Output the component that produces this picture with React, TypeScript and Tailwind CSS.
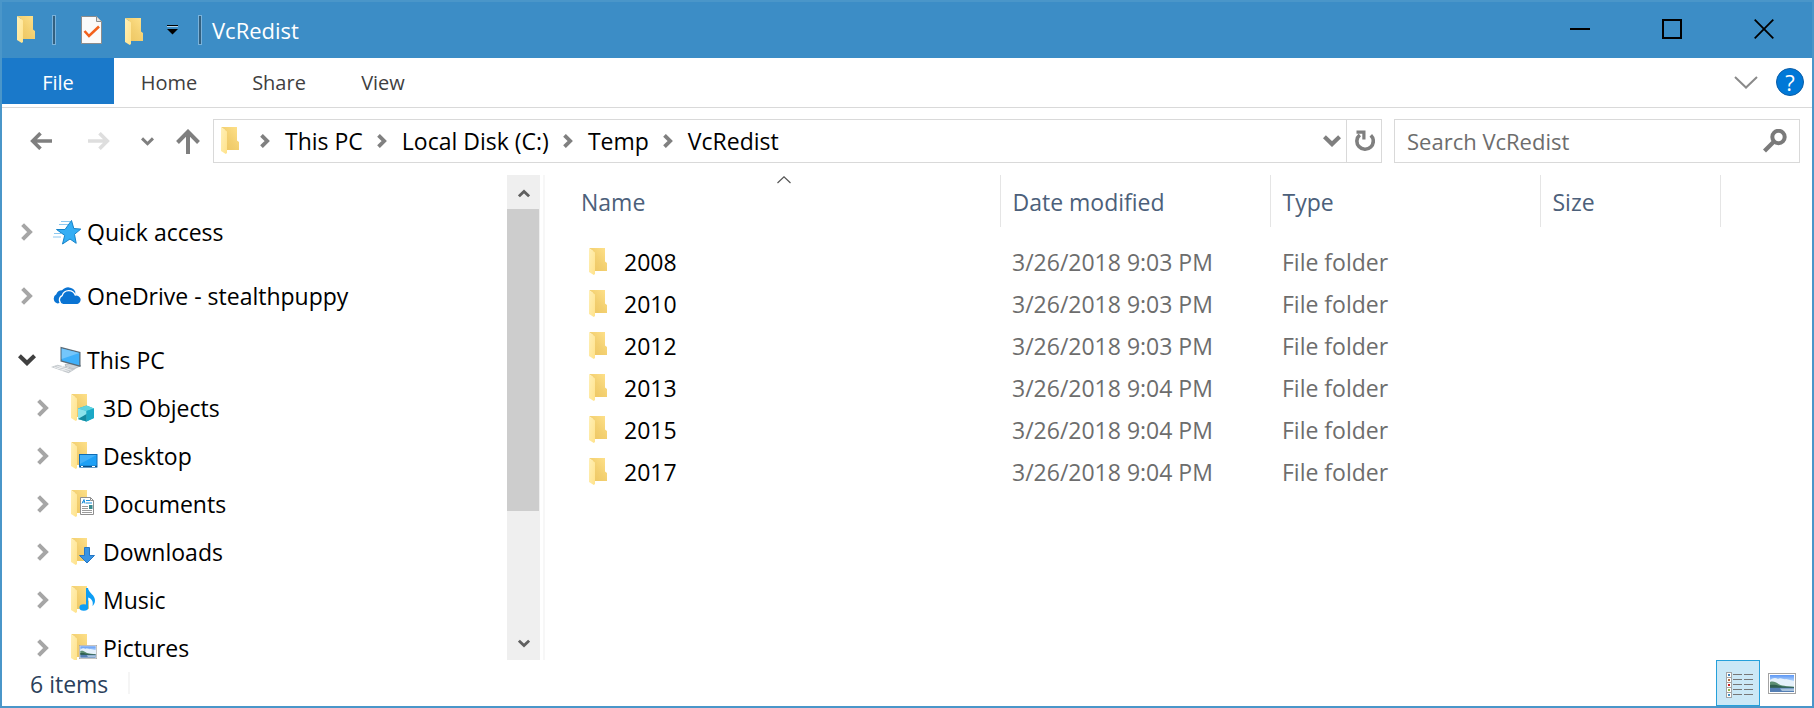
import React, { useId } from "react";

type IconProps = { className?: string };

function Chevron({ className = "" }: IconProps) {
  return (
    <svg viewBox="0 0 12 18" className={"h-[18px] w-3 shrink-0 " + className} fill="none" stroke="currentColor" strokeWidth="4">
      <path d="M1.600 1.600 9 9l-7.400 7.400" />
    </svg>
  );
}

function ChevronDown({ className = "" }: IconProps) {
  return (
    <svg viewBox="0 0 18 12" className={"shrink-0 " + className} fill="none" stroke="currentColor" strokeWidth="4.200">
      <path d="M1.400 1.700 9 9.100l7.600-7.400" />
    </svg>
  );
}

function CrumbArrow() {
  return (
    <svg viewBox="0 0 10 14" className="h-3.5 w-2.5 shrink-0 text-[#808080]" fill="none" stroke="currentColor" strokeWidth="3.800">
      <path d="M1.500 1.300 7.200 7l-5.700 5.700" />
    </svg>
  );
}

function FolderShape({ id }: { id: string }) {
  return (
    <>
      <defs>
        <linearGradient id={id + "b"} x1="0" y1="1" x2="1" y2="0">
          <stop offset="0" stopColor="#ecc45f" />
          <stop offset="0.500" stopColor="#f3d071" />
          <stop offset="1" stopColor="#ffe28c" />
        </linearGradient>
        <linearGradient id={id + "f"} x1="0" y1="0" x2="1" y2="1">
          <stop offset="0" stopColor="#fff0b8" />
          <stop offset="1" stopColor="#ffe28a" />
        </linearGradient>
      </defs>
      <path d="M0 0h16v13.500l2 1.500v8H4V3z" fill={`url(#${id}b)`} />
      <path d="M0 0 6 4.500v21.500l-1.200 1L0 24z" fill={`url(#${id}f)`} />
    </>
  );
}

function Folder({ className = "", children }: IconProps & { children?: React.ReactNode }) {
  const id = useId().replace(/[^a-zA-Z0-9]/g, "");
  return (
    <svg viewBox="0 0 27 28" className={"h-7 w-[27px] shrink-0 " + className}>
      <FolderShape id={id} />
      {children}
    </svg>
  );
}

function Landscape() {
  return (
    <>
      <defs>
        <linearGradient id="sky" x1="0" y1="0" x2="0" y2="1">
          <stop offset="0" stopColor="#5c97f5" />
          <stop offset="1" stopColor="#b5d6fb" />
        </linearGradient>
      </defs>
      <rect x="0.500" y="0.500" width="27" height="20" fill="#fff" stroke="#a3a3a3" />
      <rect x="2" y="2" width="24" height="17" fill="#dcecfb" />
      <rect x="2" y="2" width="24" height="6" fill="url(#sky)" />
      <path d="M2 7c3-2 5-3 8-1 3-2 5 1 8 0l8 2v6H2z" fill="#e6f1fb" />
      <path d="M2 9c3-1 6 0 8.500 2s5 1.500 8 2.200l7.500.6v.6H2z" fill="#5d8f73" />
      <path d="M2 12c5-.6 9 .8 13 1.500l11 .5v1H2z" fill="#2f5f50" />
      <rect x="2" y="14.800" width="24" height="4.200" fill="#557fb5" />
      <path d="M12 15.500h14V18H14z" fill="#a9c3dd" />
    </>
  );
}

function StarIcon() {
  return (
    <svg viewBox="0 0 30 26" className="h-[26px] w-[30px]">
      <path d="M10 2.500h9M8 5.500h9M3 14.500h7M2 18h8" stroke="#8cc8f0" strokeWidth="1" />
      <path d="m20.500 1.500 2.300 8 7 .6-6.300 5.200 1.700 9-6.200-4.300-7.500 5 2.200-8.600L5.500 10.500H14z" fill="#35aef4" stroke="#1583c9" strokeWidth="1" />
    </svg>
  );
}

function CloudIcon() {
  return (
    <svg viewBox="0 0 30 20" className="h-5 w-[30px]">
      <path d="M6.500 17.500A5 5 0 0 1 5.300 8.300 6 6 0 0 1 11 4.200a8 8 0 0 1 13.300 1.600L24 13z" fill="#0a74d3" />
      <path d="M12 18.600a4.800 4.800 0 0 1-.8-9 6.900 6.900 0 0 1 13-.6 4.900 4.900 0 0 1 2.300 9.600z" fill="#0a74d3" stroke="#fff" strokeWidth="1.300" />
    </svg>
  );
}

function ComputerIcon() {
  return (
    <svg viewBox="0 0 30 28" className="h-7 w-[30px]">
      <path d="m14 18.500 8-1.500 8 2.500-7 3.500-8-2z" fill="#cfd4d8" stroke="#9aa1a6" strokeWidth=".6" />
      <path d="m9.500.8 20 5.200v15L9.500 15.500z" fill="#5a6a76" />
      <path d="m10.700 2.400 17.600 4.600v12.200l-17.600-4.700z" fill="#3fb0fa" />
      <path d="m10.700 2.400 17.600 4.600-17.600 6z" fill="#74c6fb" />
      <path d="m0 21 6.500-2.300L24 23.300l-6.500 4z" fill="#c3c8cc" />
      <path d="m3 21 15 4.500M5.500 20l15 4.300M6 23l7-3.200m-2.500 4.700 7-3" stroke="#f4f5f6" strokeWidth=".8" />
    </svg>
  );
}

function CubeOverlay() {
  return (
    <>
      <path d="m7 14.500 8.500-3 7.500 3v9.500l-7.500 3.500L7 25z" fill="#25b4cc" />
      <path d="m7 14.500 8.500-3 7.500 3-7.500 2.500z" fill="#5fd3e0" />
      <path d="M7 14.500 15.500 17v10.500L7 25z" fill="#8be3ec" />
      <path d="m15.500 17 7.500-2.500V24l-7.500 3.500z" fill="#1ba8c6" />
      <path d="m7 25 8.500-5v7.500z" fill="#14899f" />
    </>
  );
}

function DesktopOverlay() {
  return (
    <>
      <rect x="8.500" y="12.500" width="17.500" height="12.500" fill="#1ea0f5" stroke="#0e6bb4" />
      <path d="M9 13h16.500L9 22z" fill="#42b0f8" />
      <path d="M9 24.500h17" stroke="#0b4f86" strokeWidth="1.500" />
      <path d="M10 24.500h2m9 0h3" stroke="#fff" strokeWidth="1" />
    </>
  );
}

function DocumentOverlay() {
  return (
    <>
      <path d="M9.500 7.500h10l3 3v14h-13z" fill="#fff" stroke="#8f8f8f" />
      <path d="M19.500 7.500v3h3" fill="none" stroke="#8f8f8f" />
      <path d="m11 13.500 2-4 1 4M11.500 12h2M15 10.500h4M15 13h6" fill="none" stroke="#1b8fdc" strokeWidth="1" />
      <path d="M11 16.500h6M11 18.500h6M11 20.500h10M11 22.500h10" stroke="#9b9b9b" />
      <rect x="18" y="15" width="3.500" height="4" fill="#3b8b8f" />
    </>
  );
}

function DownloadOverlay() {
  return <path d="M13.500 9.500h5v8h5L16 25l-7.500-7.500h5z" fill="#3894e4" stroke="#2577c4" />;
}

function MusicOverlay() {
  return (
    <>
      <ellipse cx="12.800" cy="21.500" rx="4.400" ry="3.300" fill="#0d9df4" />
      <path d="M15 2h2c.5 5 7.500 7 7 13-.2 2.500-1.500 4-2.500 5 1-4.500-.5-7-4.300-8.500V21.500H15z" fill="#0d9df4" />
    </>
  );
}

function PictureOverlay() {
  return (
    <svg x="8" y="11" width="18" height="14" viewBox="0 0 28 21" preserveAspectRatio="none">
      <Landscape />
    </svg>
  );
}

const places = [
  { name: "3D Objects", overlay: <CubeOverlay /> },
  { name: "Desktop", overlay: <DesktopOverlay /> },
  { name: "Documents", overlay: <DocumentOverlay /> },
  { name: "Downloads", overlay: <DownloadOverlay /> },
  { name: "Music", overlay: <MusicOverlay /> },
  { name: "Pictures", overlay: <PictureOverlay /> },
];

const folders = [
  { name: "2008", modified: "3/26/2018 9:03 PM" },
  { name: "2010", modified: "3/26/2018 9:03 PM" },
  { name: "2012", modified: "3/26/2018 9:03 PM" },
  { name: "2013", modified: "3/26/2018 9:04 PM" },
  { name: "2015", modified: "3/26/2018 9:04 PM" },
  { name: "2017", modified: "3/26/2018 9:04 PM" },
];

const crumbs = ["This PC", "Local Disk (C:)", "Temp", "VcRedist"];

function TitleSeparator() {
  return <span className="h-[30px] w-1 border border-[#7ab2da] bg-[#33607f]" />;
}

function TitleBar() {
  return (
    <header className="flex h-14 shrink-0 items-center bg-[#3c8dc6]">
      <div className="flex flex-1 items-center pl-[15px]">
        <Folder />
        <span className="ml-2 flex"><TitleSeparator /></span>
        <button aria-label="Properties" className="ml-[25px]">
          <svg viewBox="0 0 22 28" className="h-7 w-[22px]">
            <path d="M.5.500h15l5 5v22H.5z" fill="#fafafa" stroke="#8c8c8c" />
            <path d="M15.500.500v5h5" fill="#e2e2e2" stroke="#8c8c8c" />
            <path d="m3.500 15 4.500 5L18 10.500" fill="none" stroke="#f2611c" strokeWidth="2.600" />
          </svg>
        </button>
        <button aria-label="New folder" className="ml-[22px] pt-1"><Folder /></button>
        <button aria-label="Customize Quick Access Toolbar" className="ml-[15px]">
          <svg viewBox="0 0 12 10" className="h-2.5 w-3">
            <path d="M0 .5h11" stroke="#000" />
            <path d="M0 1.500h11" stroke="#b5d3e8" />
            <path d="M0 4h11L5.500 9.500z" fill="#000" />
          </svg>
        </button>
        <span className="ml-[19px] flex"><TitleSeparator /></span>
        <h1 className="ml-2.5 text-[22px] leading-8 text-white">VcRedist</h1>
      </div>
      <div className="flex h-full pr-0.5">
        <button aria-label="Minimize" className="flex h-full w-[92px] items-center justify-center">
          <svg viewBox="0 0 20 22" className="h-[22px] w-5"><path d="M0 10h20" stroke="#000" strokeWidth="2" /></svg>
        </button>
        <button aria-label="Maximize" className="flex h-full w-[92px] items-center justify-center">
          <svg viewBox="0 0 20 22" className="h-[22px] w-5"><rect x="1" y="1" width="18" height="18" fill="none" stroke="#000" strokeWidth="2" /></svg>
        </button>
        <button aria-label="Close" className="flex h-full w-[92px] items-center justify-center">
          <svg viewBox="0 0 20 22" className="h-[22px] w-5"><path d="m.7.700 18.600 18.600m0-18.600L.7 19.300" stroke="#000" strokeWidth="1.800" /></svg>
        </button>
      </div>
    </header>
  );
}

function Ribbon() {
  return (
    <nav className="flex h-[50px] shrink-0 items-start border-b border-[#d9d9d9] text-[20px] leading-[46px] text-[#3f3f3f]">
      <button className="flex h-[46px] w-28 justify-center bg-[#1a79ca] pt-0.5 text-white">File</button>
      <button className="h-[48px] w-[110px] pt-0.5">Home</button>
      <button className="h-[48px] w-[110px] pt-0.5">Share</button>
      <button className="h-[48px] w-[98px] pt-0.5">View</button>
      <div className="ml-auto flex h-12 items-center gap-[18px] pr-2">
        <button aria-label="Minimize the Ribbon">
          <svg viewBox="0 0 24 13" className="h-[13px] w-6" fill="none" stroke="#8a8a8a" strokeWidth="2"><path d="m1 1 11 10.500L23 1" /></svg>
        </button>
        <button aria-label="Help" className="flex size-7 items-center justify-center rounded-full border border-[#0b5ea8] bg-[#0078d7] text-[22px] leading-none text-white">?</button>
      </div>
    </nav>
  );
}

function AddressRow() {
  return (
    <div className="flex shrink-0 pt-[11px] pr-3 pb-3 pl-3.5">
      <div className="flex h-11 items-center text-[#7f7f7f]">
        <button aria-label="Back" className="flex w-[50px] justify-center">
          <svg viewBox="0 0 22 18" className="h-[18px] w-[22px]" fill="none" stroke="currentColor" strokeWidth="3.600"><path d="M22 9H3M10.500 1.200 2.700 9l7.800 7.800" /></svg>
        </button>
        <button aria-label="Forward" className="flex w-[66px] justify-center text-[#dedede]">
          <svg viewBox="0 0 22 18" className="h-[18px] w-[22px]" fill="none" stroke="currentColor" strokeWidth="3.600"><path d="M0 9h19m-7.500-7.800L19.300 9l-7.800 7.800" /></svg>
        </button>
        <button aria-label="Recent locations" className="flex w-[30px] justify-center"><ChevronDown className="h-[9px] w-[13px]" /></button>
        <button aria-label="Up" className="flex w-[51px] justify-center">
          <svg viewBox="0 0 24 25" className="h-[25px] w-6" fill="none" stroke="currentColor" strokeWidth="4"><path d="M12 25V3M1.500 13.500 12 2.800l10.500 10.700" /></svg>
        </button>
      </div>
      <div className="flex h-11 min-w-0 flex-1 items-center border border-[#d9d9d9]">
        <Folder className="ml-[7px]" />
        <ol className="ml-3 flex items-center text-[23px] leading-8 text-black">
          {crumbs.map((crumb) => (
            <li key={crumb} className="flex items-center">
              <CrumbArrow />
              <button className="pr-3.5 pl-[15px] whitespace-nowrap">{crumb}</button>
            </li>
          ))}
        </ol>
        <button aria-label="Previous locations" className="ml-auto mr-[5px] flex text-[#7f7f7f]"><ChevronDown className="h-3 w-[18px]" /></button>
        <button aria-label="Refresh" className="flex h-full w-[35px] items-center justify-center border-l border-[#d9d9d9] pl-0.5 text-[#7f7f7f]">
          <svg viewBox="0 0 20 22" className="h-[22px] w-5">
            <path d="M15.800 5.200A8.200 8.200 0 1 1 4.800 4.800" fill="none" stroke="currentColor" strokeWidth="3.600" />
            <path d="M1.500.5H10.500V9.500H7.300V3.700H1.500z" fill="currentColor" />
          </svg>
        </button>
      </div>
      <label className="ml-3 flex h-11 w-[406px] items-center border border-[#d9d9d9] px-3">
        <input aria-label="Search VcRedist" type="search" placeholder="Search VcRedist" className="min-w-0 flex-1 text-[22px] leading-8 outline-none placeholder:text-[#6d6d6d]" />
        <svg viewBox="0 0 24 24" className="size-6 shrink-0" fill="none" stroke="#7a7a7a">
          <circle cx="15.500" cy="8" r="6.200" strokeWidth="4" />
          <path d="M11 12.500 1.500 22" strokeWidth="4.200" />
        </svg>
      </label>
    </div>
  );
}

function RootRow({ icon, name, open = false }: { icon: React.ReactNode; name: string; open?: boolean }) {
  return (
    <div className="flex h-12 items-center pl-4">
      <button aria-label={"Toggle " + name} className="flex w-[18px] shrink-0 justify-center">
        {open ? <ChevronDown className="h-3 w-[18px] text-[#404040]" /> : <Chevron className="text-[#a6a6a6]" />}
      </button>
      <a href="#" className="ml-[15px] flex items-center whitespace-nowrap">
        <span className="mr-1.5 flex w-[30px] justify-center">{icon}</span>
        {name}
      </a>
    </div>
  );
}

function NavigationPane() {
  return (
    <aside className="flex w-[541px] shrink-0 pr-[3px]">
      <div className="flex-1 overflow-hidden pt-[33px] text-[23px] leading-6 text-black">
        <div className="flex flex-col gap-4">
          <RootRow icon={<StarIcon />} name="Quick access" />
          <RootRow icon={<CloudIcon />} name="OneDrive - stealthpuppy" />
          <RootRow icon={<ComputerIcon />} name="This PC" open />
        </div>
        <ul>
          {places.map((place) => (
            <li key={place.name} className="flex h-12 items-center pl-[35px]">
              <button aria-label={"Toggle " + place.name} className="flex"><Chevron className="text-[#a6a6a6]" /></button>
              <a href="#" className="ml-[22px] flex items-center gap-[5px] whitespace-nowrap">
                <Folder>{place.overlay}</Folder>
                {place.name}
              </a>
            </li>
          ))}
        </ul>
      </div>
      <div className="flex w-[33px] shrink-0 flex-col bg-[#efefef] text-[#606060]">
        <button aria-label="Scroll up" className="flex h-[34px] shrink-0 items-center justify-center pt-0.5">
          <ChevronDown className="h-[9px] w-3 rotate-180" />
        </button>
        <div className="mr-px h-[302px] bg-[#cdcdcd]" />
        <button aria-label="Scroll down" className="mt-auto flex h-[34px] shrink-0 items-center justify-center">
          <ChevronDown className="h-[9px] w-3" />
        </button>
      </div>
    </aside>
  );
}

function FileList() {
  return (
    <main className="min-w-0 flex-1 overflow-hidden border-l-2 border-[#f7f7f7]">
      <table className="w-full table-fixed text-left text-[23px] leading-8 text-[#6d6d6d]">
        <colgroup>
          <col className="w-[455px]" />
          <col className="w-[270px]" />
          <col className="w-[270px]" />
          <col className="w-[180px]" />
          <col />
        </colgroup>
        <thead className="text-[#4c607a]">
          <tr className="h-[52px]">
            <th className="relative border-r border-[#e5e5e5] pt-0.5 pl-9 font-normal">
              Name
              <svg viewBox="0 0 14 8" className="absolute top-px left-1/2 ml-[5px] h-2 w-3.5" fill="none" stroke="#555" strokeWidth="1.200"><path d="m.5 7 6.500-6.200L13.500 7" /></svg>
            </th>
            <th className="border-r border-[#e5e5e5] pt-0.5 pl-3 font-normal">Date modified</th>
            <th className="border-r border-[#e5e5e5] pt-0.5 pl-3 font-normal">Type</th>
            <th className="border-r border-[#e5e5e5] pt-0.5 pl-3 font-normal">Size</th>
            <th aria-label="Empty" />
          </tr>
        </thead>
        <tbody>
          <tr aria-hidden="true" className="h-3.5"><td colSpan={5} /></tr>
          {folders.map((folder) => (
            <tr key={folder.name} className="h-[42px]">
              <td className="p-0 pl-11">
                <a href="#" className="flex items-center gap-2 text-black">
                  <Folder />
                  {folder.name}
                </a>
              </td>
              <td className="p-0 pl-3">{folder.modified}</td>
              <td className="p-0 pl-3">File folder</td>
              <td />
              <td />
            </tr>
          ))}
        </tbody>
      </table>
    </main>
  );
}

const listMarks = ["#3f7fb5", "#b06a3c", "#c81e1e", "#8fb84a", "#3f8fc0"];

function StatusBar() {
  return (
    <footer className="flex h-[46px] shrink-0 items-center">
      <p className="pt-0.5 pl-7 text-[23px] leading-8 text-[#2b3f5c]">6 items</p>
      <span className="ml-5 h-[22px] w-0.5 bg-[#f5f5f5]" />
      <div className="ml-auto flex h-full items-center pr-4">
        <button aria-label="Details view" className="flex h-full w-11 items-center justify-center border border-[#26a0da] bg-[#cbe8f6]">
          <svg viewBox="0 0 28 26" className="mt-1 ml-1 h-[26px] w-7">
            {listMarks.map((color, i) => (
              <g key={color}>
                <rect x="0.500" y={0.5 + i * 5} width="5" height="5" fill="#fff" stroke="#a3a3a3" />
                <rect x="2" y={2 + i * 5} width="2" height="2" fill={color} />
                <path d={`M7 ${2.5 + i * 5}h9m2 0h9`} stroke="#777" />
              </g>
            ))}
          </svg>
        </button>
        <button aria-label="Large icons view" className="ml-2">
          <svg viewBox="0 0 28 21" className="h-[21px] w-7"><Landscape /></svg>
        </button>
      </div>
    </footer>
  );
}

export default function App() {
  return (
    <div className="flex h-screen flex-col overflow-hidden border-2 border-[#4a96c9] bg-white font-['Open_Sans','Noto_Sans',sans-serif]">
      <TitleBar />
      <Ribbon />
      <AddressRow />
      <div className="flex min-h-0 flex-1">
        <NavigationPane />
        <FileList />
      </div>
      <StatusBar />
    </div>
  );
}
